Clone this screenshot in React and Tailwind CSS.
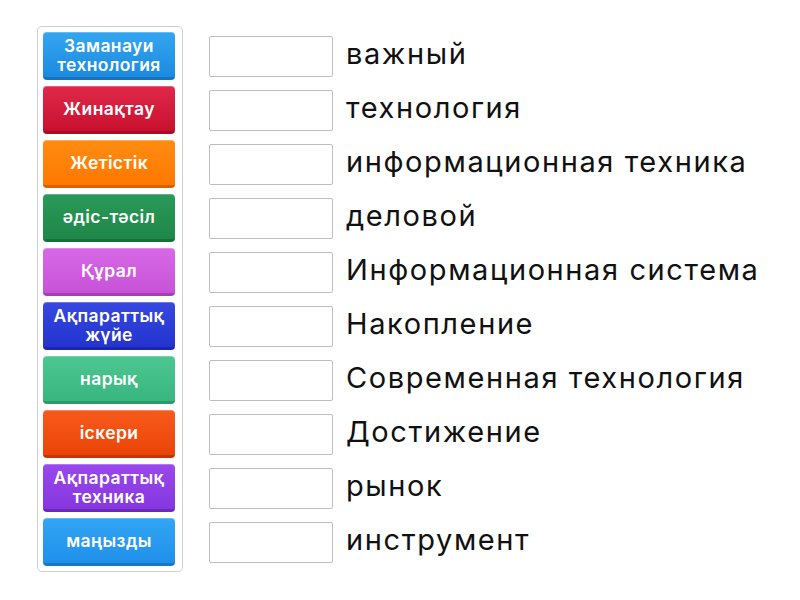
import React from 'react';

const tiles = [
  { label: ['Заманауи', 'технология'], cls: 'bg-gradient-to-b from-[#34a6f0] to-[#1b8ae0] border-[#1574c0]' },
  { label: ['Жинақтау'], cls: 'bg-gradient-to-b from-[#e0274a] to-[#c8102e] border-[#a50d26]' },
  { label: ['Жетістік'], cls: 'bg-gradient-to-b from-[#ff8c12] to-[#ff7800] border-[#d86200]' },
  { label: ['әдіс-тәсіл'], cls: 'bg-gradient-to-b from-[#2a9a58] to-[#1e8749] border-[#16703a]' },
  { label: ['Құрал'], cls: 'bg-gradient-to-b from-[#d868e6] to-[#c752d8] border-[#a73eb8]' },
  { label: ['Ақпараттық', 'жүйе'], cls: 'bg-gradient-to-b from-[#3648e0] to-[#2333cf] border-[#1a27a8]' },
  { label: ['нарық'], cls: 'bg-gradient-to-b from-[#4dc792] to-[#38b67f] border-[#2b9a69]' },
  { label: ['іскери'], cls: 'bg-gradient-to-b from-[#f85a1a] to-[#ea4408] border-[#c43504]' },
  { label: ['Ақпараттық', 'техника'], cls: 'bg-gradient-to-b from-[#9848ec] to-[#8636de] border-[#6c27bb]' },
  { label: ['маңызды'], cls: 'bg-gradient-to-b from-[#33a5f5] to-[#1f90ea] border-[#1778c6]' },
];

const words = [
  'важный',
  'технология',
  'информационная техника',
  'деловой',
  'Информационная система',
  'Накопление',
  'Современная технология',
  'Достижение',
  'рынок',
  'инструмент',
];

function Tile({ tile }) {
  return (
    <div
      className={`h-[48px] w-[132px] rounded-[4px] border-b-[3px] shadow-[inset_0_1px_0_rgba(255,255,255,0.25)] flex flex-col items-center justify-center text-white font-semibold text-[17.5px] tracking-[0.4px] leading-[18.5px] pt-[2px] ${tile.cls}`}
    >
      {tile.label.map((l) => (
        <span key={l}>{l}</span>
      ))}
    </div>
  );
}

export default function App() {
  return (
    <div
      className="w-[800px] h-[600px] bg-white flex items-start pl-[37px] pt-[26px]"
      style={{ fontFamily: 'Inter, "Noto Sans", sans-serif' }}
    >
      <div className="w-[146px] border border-[#cfcfcf] rounded-[5px] p-[5px] flex flex-col gap-[6px]">
        {tiles.map((t, i) => (
          <Tile key={i} tile={t} />
        ))}
      </div>
      <div className="ml-[26px] pt-[10px] flex flex-col gap-[13px]">
        {words.map((w) => (
          <div key={w} className="flex items-center h-[41px]">
            <div className="w-[124px] h-[41px] border border-[#bdbdbd] rounded-[2px] bg-white" />
            <span className="ml-[13px] text-[29px] tracking-[1.6px] text-[#111] leading-none -mt-[6px]">{w}</span>
          </div>
        ))}
      </div>
    </div>
  );
}
